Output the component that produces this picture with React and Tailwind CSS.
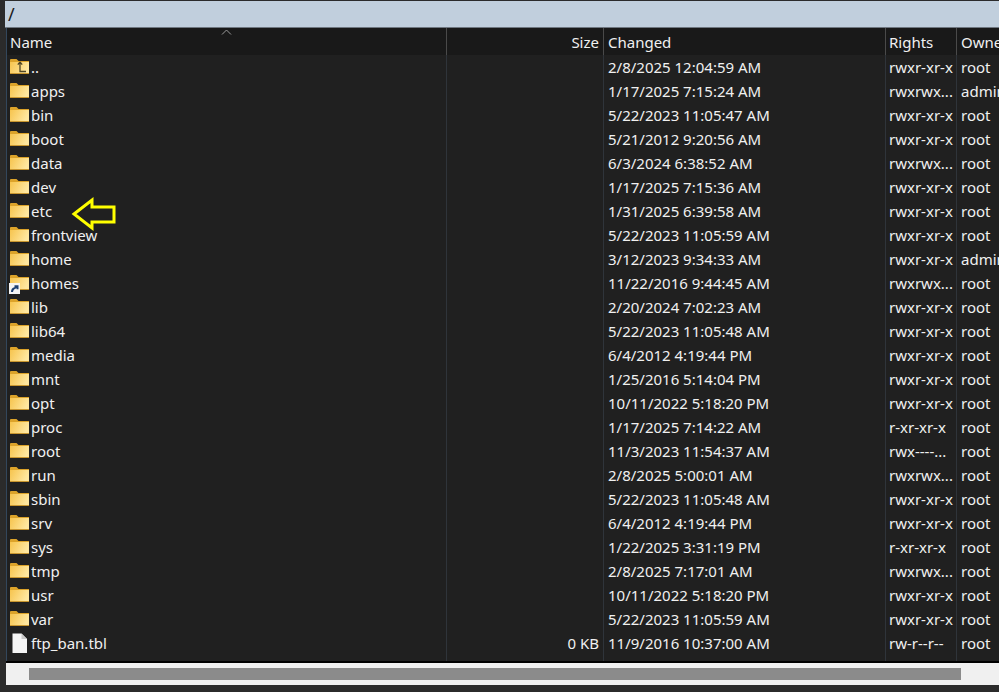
import React from 'react';

const FILES = [
  { name: '..', changed: '2/8/2025 12:04:59 AM', rights: 'rwxr-xr-x', owner: 'root', type: 'up' },
  { name: 'apps', changed: '1/17/2025 7:15:24 AM', rights: 'rwxrwx...', owner: 'admin' },
  { name: 'bin', changed: '5/22/2023 11:05:47 AM', rights: 'rwxr-xr-x', owner: 'root' },
  { name: 'boot', changed: '5/21/2012 9:20:56 AM', rights: 'rwxr-xr-x', owner: 'root' },
  { name: 'data', changed: '6/3/2024 6:38:52 AM', rights: 'rwxrwx...', owner: 'root' },
  { name: 'dev', changed: '1/17/2025 7:15:36 AM', rights: 'rwxr-xr-x', owner: 'root' },
  { name: 'etc', changed: '1/31/2025 6:39:58 AM', rights: 'rwxr-xr-x', owner: 'root' },
  { name: 'frontview', changed: '5/22/2023 11:05:59 AM', rights: 'rwxr-xr-x', owner: 'root' },
  { name: 'home', changed: '3/12/2023 9:34:33 AM', rights: 'rwxr-xr-x', owner: 'admin' },
  { name: 'homes', changed: '11/22/2016 9:44:45 AM', rights: 'rwxrwx...', owner: 'root', type: 'link' },
  { name: 'lib', changed: '2/20/2024 7:02:23 AM', rights: 'rwxr-xr-x', owner: 'root' },
  { name: 'lib64', changed: '5/22/2023 11:05:48 AM', rights: 'rwxr-xr-x', owner: 'root' },
  { name: 'media', changed: '6/4/2012 4:19:44 PM', rights: 'rwxr-xr-x', owner: 'root' },
  { name: 'mnt', changed: '1/25/2016 5:14:04 PM', rights: 'rwxr-xr-x', owner: 'root' },
  { name: 'opt', changed: '10/11/2022 5:18:20 PM', rights: 'rwxr-xr-x', owner: 'root' },
  { name: 'proc', changed: '1/17/2025 7:14:22 AM', rights: 'r-xr-xr-x', owner: 'root' },
  { name: 'root', changed: '11/3/2023 11:54:37 AM', rights: 'rwx----...', owner: 'root' },
  { name: 'run', changed: '2/8/2025 5:00:01 AM', rights: 'rwxrwx...', owner: 'root' },
  { name: 'sbin', changed: '5/22/2023 11:05:48 AM', rights: 'rwxr-xr-x', owner: 'root' },
  { name: 'srv', changed: '6/4/2012 4:19:44 PM', rights: 'rwxr-xr-x', owner: 'root' },
  { name: 'sys', changed: '1/22/2025 3:31:19 PM', rights: 'r-xr-xr-x', owner: 'root' },
  { name: 'tmp', changed: '2/8/2025 7:17:01 AM', rights: 'rwxrwx...', owner: 'root' },
  { name: 'usr', changed: '10/11/2022 5:18:20 PM', rights: 'rwxr-xr-x', owner: 'root' },
  { name: 'var', changed: '5/22/2023 11:05:59 AM', rights: 'rwxr-xr-x', owner: 'root' },
  { name: 'ftp_ban.tbl', size: '0 KB', changed: '11/9/2016 10:37:00 AM', rights: 'rw-r--r--', owner: 'root', type: 'file' },
];

const FolderIcon = ({ type }) => (
  <svg width="20" height="16" viewBox="0 0 20 16" className="shrink-0">
    <defs>
      <linearGradient id="folderFront" x1="0" y1="0" x2="1" y2="0.3">
        <stop offset="0" stopColor="#f6c44e" />
        <stop offset="1" stopColor="#ffe79f" />
      </linearGradient>
    </defs>
    <path d="M0 3 V1 Q0 0 1 0 H6.5 L8.5 2 H19 V15 H0 Z" fill="#dca32a" />
    <rect x="0" y="3" width="19" height="11.5" fill="url(#folderFront)" />
    <rect x="0" y="14" width="19" height="1" fill="#c9962f" />
    {type === 'up' && (
      <path d="M10 3 L7.8 5.6 M10 3 L12.2 5.6 M10 3 V12.5 H16" fill="none" stroke="#4f4526" strokeWidth="1.3" />
    )}
  </svg>
);

const FileIcon = () => (
  <svg width="20" height="20" viewBox="0 0 20 20" className="shrink-0">
    <path d="M2.5 0.5 H11.5 L17 6 V20 H2.5 Z" fill="#f5f5f5" />
    <path d="M11.5 0.5 V6 H17 Z" fill="#c9c9c9" />
  </svg>
);

const LinkBadge = () => (
  <div className="absolute left-[-1px] top-[8px] w-[11px] h-[11px] bg-[#f4f4f4] flex items-center justify-center">
    <svg width="9" height="9" viewBox="0 0 9 9">
      <path d="M1 8 Q1 4 4.5 3.2 V1.2 L8.5 1.2 V5.2 L6.6 5.2 V4.2 Q3.5 4.6 3 8 Z" fill="#1c3f73" />
    </svg>
  </div>
);

const Row = ({ file }) => (
  <div className="grid grid-cols-[439px_157px_282px_71px_1fr] h-6 items-center whitespace-nowrap">
    <div className="flex items-center h-full pl-[3px]">
      <div className="relative w-[21px] flex items-center shrink-0">
        {file.type === 'file' ? <FileIcon /> : <FolderIcon type={file.type} />}
        {file.type === 'link' && <LinkBadge />}
      </div>
      <span>{file.name}</span>
    </div>
    <div className="h-full border-l border-[#2f343a] pr-1 flex items-center justify-end">{file.size}</div>
    <div className="h-full border-l border-[#2f343a] pl-1 flex items-center">{file.changed}</div>
    <div className="h-full border-l border-[#2f343a] pl-[3px] flex items-center">{file.rights}</div>
    <div className="h-full border-l border-[#2f343a] pl-1 flex items-center">{file.owner}</div>
  </div>
);

export default function App() {
  return (
    <div
      className="w-[999px] h-[692px] overflow-hidden bg-[#2b2b2b] pt-px pl-[5px] flex flex-col text-[15px] text-[#f0f0f0]"
      style={{ fontFamily: '"Noto Sans", "Open Sans", sans-serif' }}
    >
      <div className="h-[27px] shrink-0 bg-[#c1cfdd] border-b border-[#6f7780] pl-[3px] flex items-center text-[18px] text-[#1a1a1a]">/</div>

      <div className="relative flex flex-col flex-1 ml-px border-l border-[#33475c] bg-[#202020] min-h-0">
        <div className="grid grid-cols-[439px_157px_282px_71px_1fr] h-[27px] shrink-0 items-center bg-[#191919] whitespace-nowrap relative">
          <div className="pl-[3px] pt-px">Name</div>
          <div className="h-full border-l border-[#4a4a4a] pr-1 pt-px flex items-center justify-end">Size</div>
          <div className="h-full border-l border-[#4a4a4a] pl-1 pt-px flex items-center">Changed</div>
          <div className="h-full border-l border-[#4a4a4a] pl-[3px] pt-px flex items-center">Rights</div>
          <div className="h-full border-l border-[#4a4a4a] pl-1 pt-px flex items-center">Owner</div>
          <svg width="11" height="6" viewBox="0 0 11 6" className="absolute left-[214px] top-[1px]">
            <path d="M1 5.5 L5.5 1 L10 5.5" fill="none" stroke="#9a9a9a" strokeWidth="1" />
          </svg>
        </div>

        <div className="flex-1 min-h-0 overflow-hidden">
          {FILES.map((file) => <Row key={file.name} file={file} />)}
          <div className="grid grid-cols-[439px_157px_282px_71px_1fr] h-[6px]">
            <div />
            <div className="border-l border-[#2f343a]" />
            <div className="border-l border-[#2f343a]" />
            <div className="border-l border-[#2f343a]" />
            <div className="border-l border-[#2f343a]" />
          </div>
        </div>

        {/* annotation arrow */}
        <svg width="46" height="36" viewBox="0 0 46 36" className="absolute left-[64px] top-[168px]">
          <path d="M3 18 L21 4 V11 L43 11 V26 L21 26 V32 Z" fill="none" stroke="#ffff00" strokeWidth="3" />
        </svg>
      </div>

      <div className="shrink-0 h-6 ml-px bg-[#f0f0f0] border-t-2 border-black pl-[23px] pt-[5px] mb-[7px]">
        <div className="w-[932px] h-3 bg-[#8b8b8b]" />
      </div>
    </div>
  );
}
